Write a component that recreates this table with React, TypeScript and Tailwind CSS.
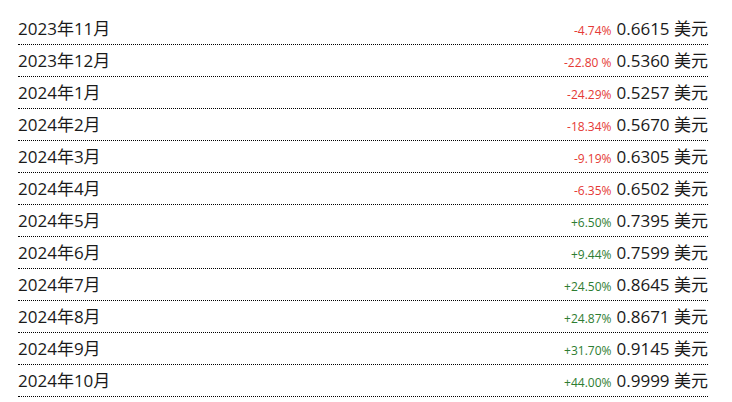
import React from "react";

const rows: [string, string, string, boolean][] = [
  ["2023年11月", "-4.74%", "0.6615", false],
  ["2023年12月", "-22.80 %", "0.5360", false],
  ["2024年1月", "-24.29%", "0.5257", false],
  ["2024年2月", "-18.34%", "0.5670", false],
  ["2024年3月", "-9.19%", "0.6305", false],
  ["2024年4月", "-6.35%", "0.6502", false],
  ["2024年5月", "+6.50%", "0.7395", true],
  ["2024年6月", "+9.44%", "0.7599", true],
  ["2024年7月", "+24.50%", "0.8645", true],
  ["2024年8月", "+24.87%", "0.8671", true],
  ["2024年9月", "+31.70%", "0.9145", true],
  ["2024年10月", "+44.00%", "0.9999", true],
];

export default function App() {
  return (
    <div
      className="w-[732px] h-[402px] bg-white pt-[13px] pl-[18px] pr-[24px] text-[#1a1a1a]"
      style={{ fontFamily: '"Open Sans", "Noto Sans CJK SC", sans-serif' }}
    >
      {rows.map(([m, p, v, up]) => (
        <div
          key={m}
          className="flex items-center justify-between h-[32px] border-b border-dotted border-black"
        >
          <span className="text-[17px] leading-none">{m}</span>
          <span className="flex items-baseline">
            <span
              className={
                "text-[12px] mr-[5px] " + (up ? "text-[#2e7d32]" : "text-[#e53935]")
              }
            >
              {p}
            </span>
            <span className="text-[17px]">{v} 美元</span>
          </span>
        </div>
      ))}
    </div>
  );
}
